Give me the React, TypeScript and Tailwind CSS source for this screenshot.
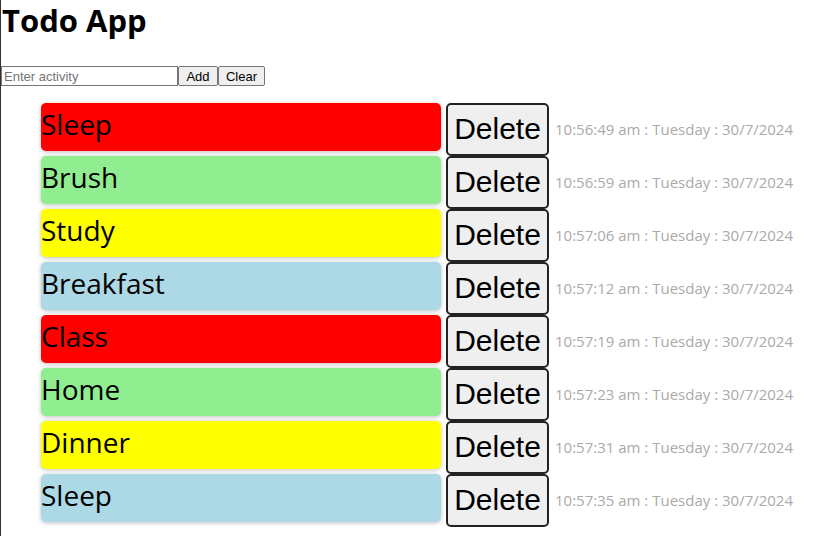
import { useState } from 'react';

type Todo = { text: string; color: string; time: string };

const todos: Todo[] = [
  { text: 'Sleep', color: 'bg-[#ff0000]', time: '10:56:49 am : Tuesday : 30/7/2024' },
  { text: 'Brush', color: 'bg-[#90ee90]', time: '10:56:59 am : Tuesday : 30/7/2024' },
  { text: 'Study', color: 'bg-[#ffff00]', time: '10:57:06 am : Tuesday : 30/7/2024' },
  { text: 'Breakfast', color: 'bg-[#add8e6]', time: '10:57:12 am : Tuesday : 30/7/2024' },
  { text: 'Class', color: 'bg-[#ff0000]', time: '10:57:19 am : Tuesday : 30/7/2024' },
  { text: 'Home', color: 'bg-[#90ee90]', time: '10:57:23 am : Tuesday : 30/7/2024' },
  { text: 'Dinner', color: 'bg-[#ffff00]', time: '10:57:31 am : Tuesday : 30/7/2024' },
  { text: 'Sleep', color: 'bg-[#add8e6]', time: '10:57:35 am : Tuesday : 30/7/2024' },
];

export default function App() {
  const [value, setValue] = useState('');

  return (
    <div className="min-h-screen border-l border-[#333] bg-white text-black font-['Open_Sans',sans-serif]">
      <h1 className="text-[31px] leading-[40px] font-bold pl-[1px] mb-[26px]">Todo App</h1>

      <div className="flex font-['Liberation_Sans',Arial,sans-serif] text-[13px]">
        <input
          value={value}
          onChange={(e) => setValue(e.target.value)}
          placeholder="Enter activity"
          className="w-[177px] h-[20px] border border-[#767676] px-[2px] placeholder:text-[#757575] outline-none"
        />
        <button className="h-[20px] w-[40px] border border-[#767676] rounded-[2px] bg-[#efefef]">Add</button>
        <button className="h-[20px] w-[47px] border border-[#767676] rounded-[2px] bg-[#efefef]">Clear</button>
      </div>

      <ul className="pl-[40px] mt-[17px]">
        {todos.map((t, i) => (
          <li key={i} className="flex items-start h-[53px]">
            <div
              className={`${t.color} w-[400px] h-[48px] rounded-[5px] shadow-[0_1px_4px_rgba(0,0,0,0.25)] text-[28px] leading-[42px]`}
            >
              {t.text}
            </div>
            <button className="ml-[5px] w-[103px] h-[53px] border-2 border-[#222] rounded-[5px] bg-[#efefef] text-[30px] leading-[46px] pb-[2px] font-['Liberation_Sans',Arial,sans-serif]">
              Delete
            </button>
            <span className="ml-[6px] self-center text-[15px] text-[#aaaaaa] pb-[1px]">{t.time}</span>
          </li>
        ))}
      </ul>
    </div>
  );
}
